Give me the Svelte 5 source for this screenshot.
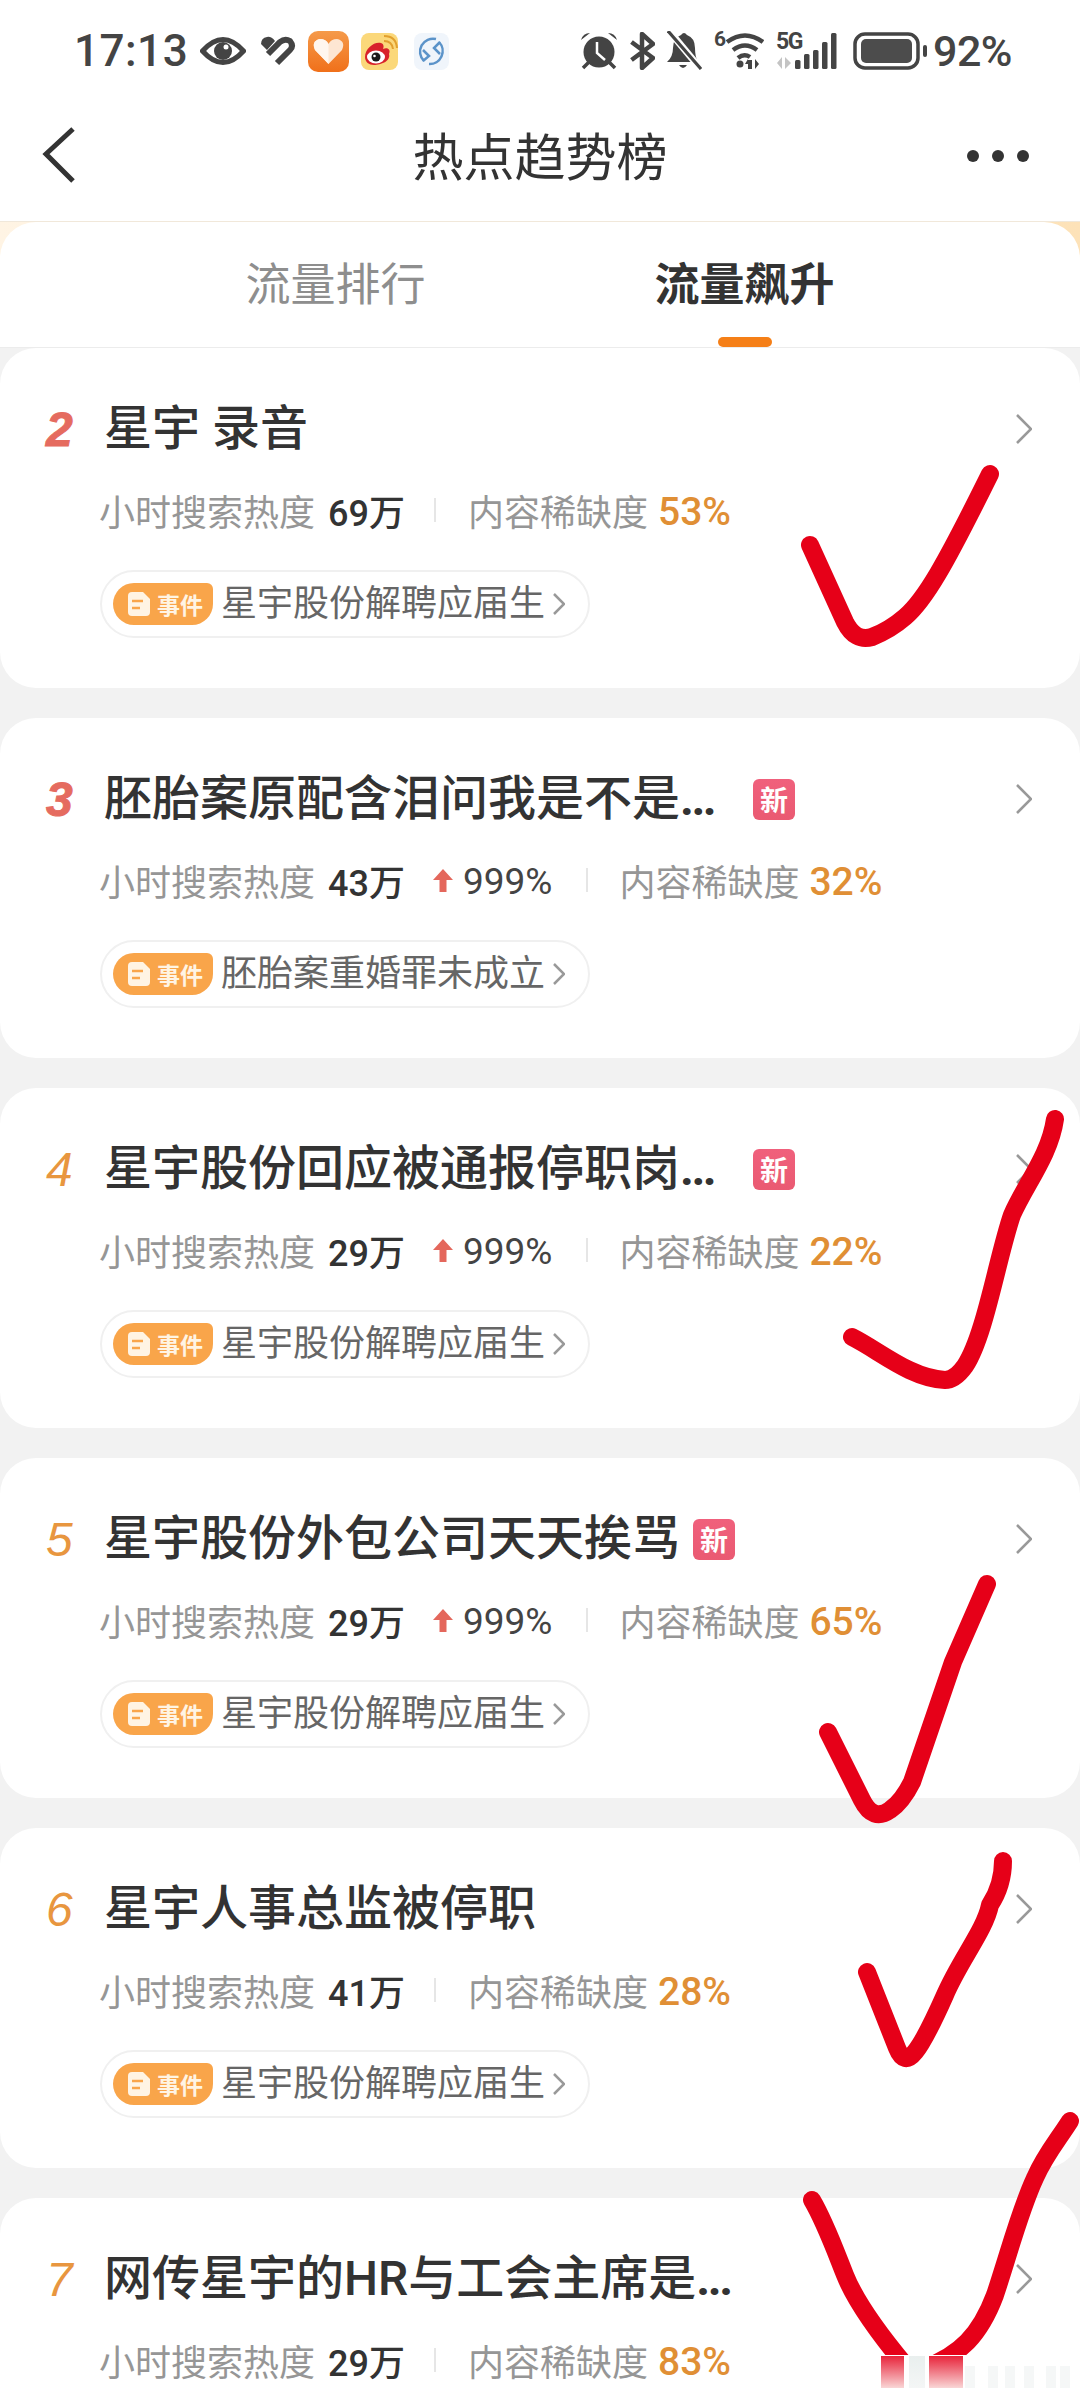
<script>
  const items = [
    { rank: 2, title: "星宇 录音", heat: "69万", scarcity: "53%", event: "星宇股份解聘应届生" },
    { rank: 3, title: "胚胎案原配含泪问我是不是", more: true, isNew: true, heat: "43万", delta: "999%", scarcity: "32%", event: "胚胎案重婚罪未成立" },
    { rank: 4, title: "星宇股份回应被通报停职岗", more: true, isNew: true, heat: "29万", delta: "999%", scarcity: "22%", event: "星宇股份解聘应届生" },
    { rank: 5, title: "星宇股份外包公司天天挨骂", isNew: true, heat: "29万", delta: "999%", scarcity: "65%", event: "星宇股份解聘应届生" },
    { rank: 6, title: "星宇人事总监被停职", heat: "41万", scarcity: "28%", event: "星宇股份解聘应届生" },
    { rank: 7, title: "网传星宇的HR与工会主席是", more: true, heat: "29万", scarcity: "83%" }
  ];

  // hand drawn red ticks, in page coordinates
  const ticks = [
    "M810 545 L845 622 Q855 642 872 637 Q890 630 905 617 C925 600 945 565 990 474",
    "M852 1337 C880 1351 910 1378 945 1380 Q955 1380 965 1366 C985 1336 998 1255 1012 1215 C1025 1185 1050 1155 1055 1119",
    "M828 1732 L862 1800 Q873 1822 890 1810 Q902 1802 912 1782 L953 1662 L987 1584",
    "M867 1972 L897 2048 Q904 2066 915 2052 Q925 2040 945 1995 C960 1960 985 1930 990 1905 Q1003 1885 1003 1861",
    "M812 2200 C825 2222 835 2250 845 2275 C855 2300 880 2335 905 2365 L925 2368 C960 2355 980 2335 995 2295 C1010 2250 1020 2210 1035 2178 C1045 2155 1058 2140 1070 2121"
  ];

  const stripes = [965, 988, 1005, 1024, 1046, 1060];
</script>

<div class="page">
  <div class="status">
    <span class="time">17:13</span>
    <svg width="46" height="30" viewBox="0 0 46 30">
      <path d="M2.500 15 Q23 -8 43.500 15 Q23 38 2.500 15 Z" fill="none" stroke="#444" stroke-width="5" />
      <circle cx="23" cy="15" r="9" fill="#444" />
      <circle cx="26" cy="11" r="2.500" fill="#fff" />
    </svg>
    <svg class="split" width="36" height="30" viewBox="0 0 36 30">
      <path d="M1 8 Q1 2 7 1 Q11 0 15 5 L7 14 Z" fill="#444" />
      <path d="M8 18 L20 6 Q25 2 30 5 Q34 10 30 14 L17 27" fill="none" stroke="#444" stroke-width="6" />
    </svg>
    <svg width="41" height="41" viewBox="0 0 41 41">
      <defs>
        <linearGradient id="appBg" x1="0" y1="0" x2="0" y2="1">
          <stop offset="0" stop-color="#f59a4a" />
          <stop offset="1" stop-color="#f0701a" />
        </linearGradient>
      </defs>
      <rect width="41" height="41" rx="10" fill="url(#appBg)" />
      <path d="M20.500 33 L7 19 Q3 10 12 8 Q18 8 20.500 13 Q23 8 29 8 Q38 10 34 19 Z" fill="#fde6d2" />
      <path d="M20.500 33 L7 19 Q3 10 12 8 Q18 8 20.500 13 Z" fill="#fff6ee" />
    </svg>
    <svg width="37" height="37" viewBox="0 0 37 37">
      <rect width="37" height="37" rx="8" fill="#fbd87a" />
      <path d="M4 24 C4 15 14 8 20 10 C23 11 23 14 22 16 C27 14 30 17 28 21 C30 28 20 32 13 32 C8 32 4 29 4 24 Z" fill="#d8222a" />
      <ellipse cx="15" cy="24" rx="9" ry="6.500" fill="#fff" />
      <circle cx="15" cy="24" r="4.500" fill="#1a1a1a" />
      <circle cx="13.500" cy="23" r="1.300" fill="#fff" />
      <path d="M23 8 Q31 8 32 16 M23 3 Q35 3 36 15" fill="none" stroke="#e2a02e" stroke-width="2" />
    </svg>
    <svg class="third" width="35" height="37" viewBox="0 0 35 37">
      <rect width="35" height="37" rx="8" fill="#f0f5fb" />
      <path d="M10 28 A13 13 0 0 1 22 6 M25 9 A13 13 0 0 1 15 31" fill="none" stroke="#5b93c9" stroke-width="2.500" />
      <path d="M9 17 L15 23 L9 28 M26 9 L20 15 L26 21" fill="none" stroke="#5b93c9" stroke-width="2.500" />
    </svg>

    <div class="status-right">
      <svg width="38" height="38" viewBox="0 0 38 38">
        <path d="M1 8 Q3 1 10 1 Z M37 8 Q35 1 28 1 Z" fill="#444" />
        <circle cx="19" cy="20" r="15.500" fill="#444" />
        <path d="M3 36 L9 30 M35 36 L29 30" stroke="#444" stroke-width="3.500" />
        <path d="M17 10 L17 21 L25 28" fill="none" stroke="#fff" stroke-width="2.500" />
      </svg>
      <svg width="25" height="38" viewBox="0 0 25 38">
        <path d="M1.500 10 L23 26 L12 36 L12 2 L23 12 L1.500 28" fill="none" stroke="#444" stroke-width="4.500" stroke-linejoin="round" />
      </svg>
      <svg width="35" height="40" viewBox="0 0 35 40">
        <path d="M0 31 Q6 26 6 17 Q6 7 14 4 Q17 0 20 4 Q28 7 28 17 Q28 26 31 31 Z" fill="#444" />
        <path d="M12 34 Q16 40 20 34 Z" fill="#444" />
        <path d="M3 1 L33 37" stroke="#fff" stroke-width="7" />
        <path d="M1 0 L34 38" stroke="#444" stroke-width="3.200" />
      </svg>
      <svg width="50" height="48" viewBox="0 -4 50 48">
        <text x="0" y="15" class="tiny">6</text>
        <path d="M13 11 Q31 -2 49 11" fill="none" stroke="#444" stroke-width="4.500" />
        <path d="M19 19 Q31 10 43 19" fill="none" stroke="#444" stroke-width="4.500" />
        <path d="M24 27 Q30 22 36 26" fill="none" stroke="#444" stroke-width="4.500" />
        <circle cx="26" cy="33" r="3.500" fill="#444" />
        <path d="M34 38 L34 29 L38 29 L38 38 Z M34 33 L31 33 L34 28 Z M41 28 L41 38 L45 33 Z" fill="#444" />
      </svg>
      <svg width="65" height="46" viewBox="0 -4 65 46">
        <text x="0" y="17" class="tiny five">5G</text>
        <path d="M6 37 L6 25 L1 31 Z M9 25 L9 37 L15 31 Z" fill="#c4c4c4" />
        <rect x="19" y="28" width="5.500" height="9" rx="1.500" fill="#444" />
        <rect x="28" y="22" width="5.500" height="15" rx="1.500" fill="#444" />
        <rect x="37" y="18" width="5.500" height="19" rx="1.500" fill="#444" />
        <rect x="46" y="10" width="5.500" height="27" rx="1.500" fill="#444" />
        <rect x="55" y="1" width="5.500" height="36" rx="1.500" fill="#444" />
      </svg>
      <svg width="74" height="38" viewBox="0 0 74 38">
        <rect x="2" y="2" width="63" height="34" rx="10" fill="none" stroke="#444" stroke-width="3.500" />
        <rect x="8" y="7" width="51" height="24" rx="5" fill="#4c4c4c" />
        <rect x="70" y="13" width="4" height="12" rx="2" fill="#444" />
      </svg>
      <span class="battery">92%</span>
    </div>
  </div>

  <div class="nav">
    <svg class="back" width="36" height="60" viewBox="0 0 36 60">
      <path d="M32 3 L5 28 L32 55" fill="none" stroke="#333" stroke-width="5" />
    </svg>
    <div class="nav-title">热点趋势榜</div>
    <div class="dots"><i></i><i></i><i></i></div>
  </div>

  <div class="tabs-bg">
    <div class="tabs">
      <div class="tab">流量排行</div>
      <div class="tab active">流量飙升<span class="bar"></span></div>
    </div>
  </div>

  <div class="list">
    {#each items as item}
      <div class="card">
        <div class="head">
          <span class="rank" class:hot={item.rank < 4}>{item.rank}</span>
          <span class="title" class:cut={item.more}>{item.title}{#if item.more}<span class="more">...</span>{/if}</span>
          {#if item.isNew}<span class="new">新</span>{/if}
          <svg class="arrow" width="16" height="30" viewBox="0 0 16 30">
            <path d="M1 1 L15 15 L1 29" fill="none" stroke="#999" stroke-width="2.600" />
          </svg>
        </div>
        <div class="metrics">
          <span class="label">小时搜索热度</span>
          <span class="value">{item.heat}</span>
          {#if item.delta}
            <svg class="up" width="20" height="23" viewBox="0 0 20 23">
              <path d="M10 0 L20 11 L13.500 11 L13.500 23 L6.500 23 L6.500 11 L0 11 Z" fill="#e4675c" />
            </svg>
            <span class="delta">{item.delta}</span>
          {/if}
          <span class="sep"></span>
          <span class="label">内容稀缺度</span>
          <span class="pct">{item.scarcity}</span>
        </div>
        {#if item.event}
          <div class="pill">
            <span class="tag">
              <svg width="22" height="24" viewBox="0 0 22 24">
                <path d="M4 0 L15 0 L22 7 L22 20 Q22 24 18 24 L4 24 Q0 24 0 20 L0 4 Q0 0 4 0 Z" fill="#fff4e4" />
                <path d="M4 9 L15 9 M4 16 L12 16" stroke="#f9a54a" stroke-width="2.600" />
              </svg>
              事件
            </span>
            <span class="event">{item.event}</span>
            <svg class="pill-arrow" width="12" height="22" viewBox="0 0 12 22">
              <path d="M1 1 L11 11 L1 21" fill="none" stroke="#999" stroke-width="2.500" />
            </svg>
          </div>
        {/if}
      </div>
    {/each}
  </div>

  <svg class="ink" width="1080" height="2400" viewBox="0 0 1080 2400">
    <defs>
      <linearGradient id="fade" x1="0" y1="0" x2="0" y2="1">
        <stop offset="0" stop-color="#e8233a" />
        <stop offset="1" stop-color="#f9d6d6" />
      </linearGradient>
      <linearGradient id="fadeGrey" x1="0" y1="0" x2="0" y2="1">
        <stop offset="0" stop-color="#e9efee" />
        <stop offset="1" stop-color="#f4f6f6" />
      </linearGradient>
    </defs>
    {#each ticks as d}
      <path {d} fill="none" stroke="#e60018" stroke-width="18" stroke-linecap="round" stroke-linejoin="round" />
    {/each}
    <!-- smeared strip at the very bottom -->
    <rect x="878" y="2355" width="202" height="45" fill="#fff" />
    <rect x="881" y="2356" width="23" height="32" fill="url(#fade)" />
    <rect x="909" y="2356" width="16" height="32" fill="url(#fadeGrey)" />
    <rect x="929" y="2356" width="34" height="32" fill="url(#fade)" />
    {#each stripes as x}
      <rect {x} y="2366" width="10" height="22" fill="#f5f7f7" />
    {/each}
  </svg>
</div>

<style>
  :global(body) {
    margin: 0;
    background: #f2f2f2;
  }
  .page {
    position: relative;
    width: 1080px;
    height: 2400px;
    overflow: hidden;
    background: #f2f2f2;
    font-family: Roboto, "Noto Sans CJK SC", sans-serif;
    color: #333;
  }

  /* status bar */
  .status {
    display: flex;
    align-items: center;
    gap: 12px;
    height: 102px;
    padding-left: 74px;
    background: #fff;
    color: #444;
  }
  .time {
    font-size: 44px;
    font-weight: 500;
    letter-spacing: 0.5px;
  }
  .split {
    margin-left: 2px;
  }
  .third {
    margin-left: 4px;
  }
  .status-right {
    display: flex;
    align-items: center;
    gap: 12px;
    margin-left: auto;
    padding-right: 68px;
  }
  .tiny {
    font-family: Roboto, sans-serif;
    font-size: 21px;
    font-weight: 700;
    fill: #444;
  }
  .five {
    font-size: 23px;
    letter-spacing: -1.500px;
  }
  .battery {
    margin-left: -6px;
    font-size: 43px;
    font-weight: 500;
    letter-spacing: -0.5px;
  }

  /* nav */
  .nav {
    display: grid;
    grid-template-columns: 1fr auto 1fr;
    align-items: center;
    height: 108px;
    padding-bottom: 11px;
    background: #fff;
    border-bottom: 1px solid #f1e8da;
  }
  .back {
    margin-left: 41px;
  }
  .nav-title {
    padding-top: 5px;
    font-size: 51px;
    line-height: 60px;
    color: #333;
  }
  .dots {
    display: flex;
    justify-content: flex-end;
    gap: 13px;
    padding-right: 51px;
  }
  .dots i {
    width: 12px;
    height: 12px;
    border-radius: 50%;
    background: #333;
  }

  /* tabs */
  .tabs-bg {
    background: linear-gradient(90deg, #fff4e4, #fde2b8);
  }
  .tabs {
    display: flex;
    justify-content: center;
    gap: 229px;
    height: 91px;
    padding-top: 34px;
    background: #fff;
    border-radius: 36px 36px 0 0;
    border-bottom: 1px solid #ececec;
  }
  .tab {
    display: flex;
    flex-direction: column;
    align-items: center;
    font-size: 45px;
    line-height: 60px;
    color: #8e8e8e;
  }
  .tab.active {
    color: #333;
    font-weight: 700;
  }
  .bar {
    width: 54px;
    height: 10px;
    margin-top: 21px;
    border-radius: 5px;
    background: #f57f17;
  }

  /* cards */
  .list {
    display: flex;
    flex-direction: column;
    gap: 30px;
  }
  .card {
    box-sizing: border-box;
    flex: none;
    height: 340px;
    padding-top: 51px;
    background: #fff;
    border-radius: 36px;
  }
  .head {
    display: flex;
    align-items: center;
    height: 60px;
    padding: 0 48px 0 46px;
  }
  .rank {
    width: 58px;
    font-family: "Liberation Sans", sans-serif;
    font-size: 48px;
    font-style: italic;
    color: #e8963f;
  }
  .rank.hot {
    font-weight: 700;
    color: #e56b5f;
    -webkit-text-stroke: 1px #e56b5f;
  }
  .title {
    font-size: 48px;
    font-weight: 500;
    line-height: 60px;
    color: #333;
    white-space: nowrap;
  }
  .title.cut {
    min-width: 629px;
  }
  .more {
    font-weight: 700;
    letter-spacing: -2.500px;
  }
  .new {
    display: flex;
    align-items: center;
    justify-content: center;
    width: 42px;
    height: 41px;
    margin-left: 13px;
    border-radius: 6px;
    background: linear-gradient(180deg, #f0607c, #ea5a72);
    color: #fff;
    font-size: 28px;
    font-weight: 700;
  }
  .cut + .new {
    margin-left: 20px;
  }
  .arrow {
    margin-left: auto;
  }
  .metrics {
    display: flex;
    align-items: center;
    height: 50px;
    margin-top: 26px;
    padding-left: 99px;
    font-size: 36px;
  }
  .label {
    color: #969696;
  }
  .value {
    margin-left: 13px;
    font-size: 36px;
    font-weight: 500;
    color: #333;
  }
  .up {
    margin-left: 28px;
  }
  .delta {
    margin-left: 10px;
    padding-top: 3px;
    font-size: 37px;
    color: #444;
  }
  .sep {
    width: 2px;
    height: 24px;
    margin: 0 32px 0 29px;
    background: #e6e6e6;
  }
  .delta + .sep {
    margin: 0 31px 0 34px;
  }
  .pct {
    margin-left: 10px;
    padding-top: 3px;
    font-size: 39px;
    font-weight: 500;
    color: #e08f35;
  }
  .pill {
    box-sizing: border-box;
    display: flex;
    align-items: center;
    width: 490px;
    height: 68px;
    margin: 35px 0 0 100px;
    padding-left: 11px;
    border: 2px solid #f0f0f0;
    border-radius: 34px;
  }
  .tag {
    display: flex;
    align-items: center;
    gap: 7px;
    box-sizing: border-box;
    width: 100px;
    height: 42px;
    padding-left: 15px;
    border-radius: 21px 6px 21px 21px;
    background: #f9a54a;
    color: #fff4e4;
    font-size: 23px;
    font-weight: 700;
  }
  .event {
    margin-left: 8px;
    font-size: 36px;
    line-height: 44px;
    color: #666;
  }
  .pill-arrow {
    margin-left: 8px;
  }

  .ink {
    position: absolute;
    top: 0;
    left: 0;
    pointer-events: none;
  }
</style>
